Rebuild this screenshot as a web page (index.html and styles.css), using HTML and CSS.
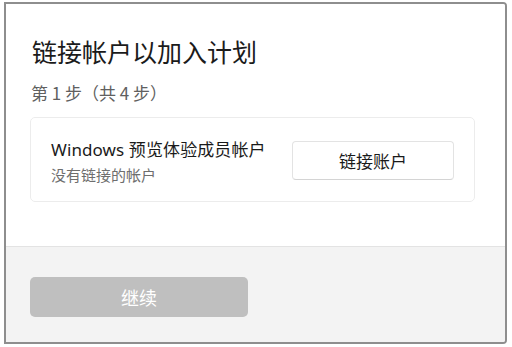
FILE: index.html
```html
<!DOCTYPE html>
<html lang="zh-CN">
<head>
<meta charset="utf-8">
<link rel="stylesheet" href="styles.css">
</head>
<body>
<div class="dialog">
  <div class="main">
    <h1 class="title">链接帐户以加入计划</h1>
    <div class="step">第 1 步（共 4 步）</div>
    <div class="card">
      <div class="info">
        <div class="name">Windows 预览体验成员帐户</div>
        <div class="status">没有链接的帐户</div>
      </div>
      <button class="link-btn">链接账户</button>
    </div>
  </div>
  <div class="footer">
    <button class="continue">继续</button>
  </div>
</div>
</body>
</html>
```
FILE: styles.css
```css
html, body {
  margin: 0;
  padding: 0;
  background: #ffffff;
}
body {
  font-family: "Noto Sans", "Noto Sans CJK SC", sans-serif;
  color: #1a1a1a;
}
.dialog {
  box-sizing: border-box;
  margin: 2px 0 0 4px;
  width: 503px;
  height: 342px;
  border: 2px solid #8e8e8e;
  border-radius: 0 4px 4px 0;
  display: flex;
  flex-direction: column;
  overflow: hidden;
}
.main {
  flex: 1;
  background: #ffffff;
  padding: 30px 30px 0 24px;
}
.title {
  margin: 0 0 0 2px;
  font-family: "Noto Sans CJK SC", sans-serif;
  font-weight: 400;
  font-size: 25px;
  line-height: 34px;
  color: #1b1b1b;
}
.step {
  margin: 13px 0 0 1px;
  font-family: "Noto Sans CJK SC", sans-serif;
  font-size: 17px;
  line-height: 24px;
  color: #606060;
}
.card {
  margin-top: 12px;
  height: 85px;
  box-sizing: border-box;
  border: 1px solid #ececec;
  border-radius: 5px;
  display: flex;
  align-items: center;
  padding: 0 20px 0 20px;
  justify-content: space-between;
}
.info {
  display: flex;
  flex-direction: column;
  margin-top: 2px;
}
.name {
  font-size: 17px;
  line-height: 24px;
  color: #1a1a1a;
  letter-spacing: 0.1px;
}
.status {
  margin-top: 4px;
  font-family: "Noto Sans CJK SC", sans-serif;
  font-size: 15px;
  line-height: 18px;
  color: #6e6e6e;
}
.link-btn {
  width: 162px;
  height: 39px;
  background: #ffffff;
  border: 1px solid #e3e3e3;
  border-bottom-color: #d4d4d4;
  border-radius: 4px;
  font-family: "Noto Sans CJK SC", sans-serif;
  font-size: 17px;
  color: #1a1a1a;
  margin-top: 2px;
}
.footer {
  height: 96px;
  background: #f3f3f3;
  border-top: 1px solid #e3e3e3;
  padding: 30px 0 0 24px;
  box-sizing: border-box;
}
.continue {
  width: 218px;
  height: 40px;
  background: #bfbfbf;
  border: none;
  border-radius: 5px;
  font-family: "Noto Sans CJK SC", sans-serif;
  font-size: 18px;
  color: #ffffff;
}
```
